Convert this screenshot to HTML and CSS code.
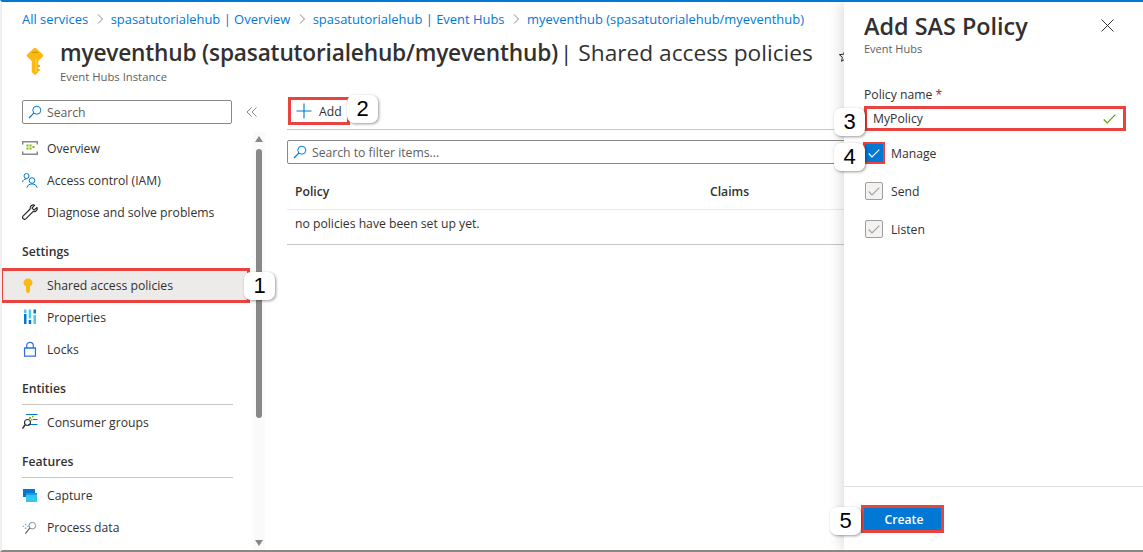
FILE: index.html
```html
<!DOCTYPE html>
<html>
<head>
  <meta charset="UTF-8">
  <title>Add SAS Policy</title>
  <link rel="stylesheet" href="styles.css">
</head>
<body>
  <div class="page">
    <nav class="crumbs">
      <a>All services</a><span class="sep"><svg width="8" height="10" viewBox="0 0 8 10"><path d="M2 .5 6.5 5 2 9.5" fill="none" stroke="#8a8886"/></svg></span>
      <a>spasatutorialehub | Overview</a><span class="sep"><svg width="8" height="10" viewBox="0 0 8 10"><path d="M2 .5 6.5 5 2 9.5" fill="none" stroke="#8a8886"/></svg></span>
      <a>spasatutorialehub | Event Hubs</a><span class="sep"><svg width="8" height="10" viewBox="0 0 8 10"><path d="M2 .5 6.5 5 2 9.5" fill="none" stroke="#8a8886"/></svg></span>
      <a>myeventhub (spasatutorialehub/myeventhub)</a>
    </nav>

    <header class="head">
      <svg class="head-key" width="18" height="28" viewBox="0 0 18 28">
        <path d="M9 2 16 8.500 11 13.500V24.500L9 26.500 7 24.500V13.500L2 8.500Z" fill="#fcb913" stroke="#fcb913" stroke-width="2.500" stroke-linejoin="round"/>
        <path d="M11.500 18H14V20H11.500M11.500 22H13.500V24H11.500" fill="#f5a800"/>
        <path d="M6.500 5.500H11.500" stroke="#e09a00" stroke-width="1.600" stroke-linecap="round"/>
        <path d="M10 12V25" stroke="#ffd75e" stroke-width="1"/>
      </svg>
      <div>
        <h1 class="title"><b>myeventhub (spasatutorialehub/myeventhub)</b><span class="title-rest"> | Shared access policies</span></h1>
        <div class="subtitle">Event Hubs Instance</div>
      </div>
      <svg class="star" width="14" height="14" viewBox="0 0 14 14"><path d="M7 1.500 8.600 5.300 12.700 5.600 9.600 8.300 10.500 12.300 7 10.200 3.500 12.300 4.400 8.300 1.300 5.600 5.400 5.300Z" fill="none" stroke="#323130"/></svg>
    </header>

    <div class="body">
      <aside class="side">
        <div class="side-top">
          <div class="searchbox side-search">
            <svg width="14" height="14" viewBox="0 0 14 14"><circle cx="8.800" cy="5.200" r="4" fill="none" stroke="#0078d4"/><path d="M5.800 8.200 1 13" stroke="#0078d4" stroke-width="1.200"/></svg>
            <span>Search</span>
          </div>
          <svg class="collapse" width="12" height="10" viewBox="0 0 12 10"><path d="M5.500 .5 1 5 5.500 9.500M10.500 .5 6 5 10.500 9.500" fill="none" stroke="#8a8886"/></svg>
        </div>
        <div class="side-scroll">
          <ul class="menu">
            <li class="item"><svg width="16" height="14" viewBox="0 0 16 14"><path d="M.7 3.500V.7H15.300V3.500M.7 10.500V13.300H15.300V10.500" fill="none" stroke="#8a8886" stroke-width="1.500"/><path d="M4.500 3.500h2v2h-2zM7.500 3.500h2v2h-2zM4.500 6.500h2v2h-2zM7.500 6.500h2v2h-2zM10.500 5h2v2h-2z" fill="#7fba00"/></svg><span>Overview</span></li>
            <li class="item"><svg width="16" height="15" viewBox="0 0 16 15"><circle cx="4.500" cy="3" r="2.500" fill="none" stroke="#0078d4"/><path d="M.5 9C1 6.800 2.500 6 4.500 6" fill="none" stroke="#0078d4"/><circle cx="10" cy="7.500" r="2.800" fill="none" stroke="#0078d4"/><path d="M5 14.800C5.300 12 7.500 11 10 11S14.700 12 15 14.800" fill="none" stroke="#0078d4"/></svg><span>Access control (IAM)</span></li>
            <li class="item"><svg width="16" height="16" viewBox="0 0 16 16"><path d="M15 3.500 12 6.200 10 4.200 12.600 1.200C10.500 .3 7.800 1.800 8.200 5L1 12.200C.2 13 .5 14 1.200 14.700S3 15.500 3.800 14.800L11 7.600C14 8.200 15.800 6 15 3.500Z" fill="none" stroke="#201f1e" stroke-width="1.100" stroke-linejoin="round"/></svg><span>Diagnose and solve problems</span></li>
          </ul>
          <h2 class="group">Settings</h2>
          <ul class="menu">
            <li class="item item-active"><svg width="12" height="16" viewBox="0 0 12 16"><path d="M6 .5C8.500 .5 10.500 2.300 10.500 4.800 10.500 6.500 9.300 7.700 8 8.300V13.500L6 15.500 4 13.500V8.300C2.700 7.700 1.500 6.500 1.500 4.800 1.500 2.300 3.500 .5 6 .5Z" fill="#fcb913"/></svg><span>Shared access policies</span></li>
            <li class="item"><svg width="13" height="16" viewBox="0 0 13 16"><path d="M.5 5h2.500v10H.5z" fill="#0078d4"/><path d="M.5 .5h2.500v3.500H.5z" fill="#50c8f0"/><path d="M5.200 .5h2.500v9H5.200z" fill="#50c8f0"/><path d="M5.200 11h2.500v4H5.200z" fill="#0078d4"/><path d="M10 .5h2.500v4H10z" fill="#0078d4"/><path d="M10 6h2.500v9H10z" fill="#50c8f0"/></svg><span>Properties</span></li>
            <li class="item"><svg width="13" height="16" viewBox="0 0 13 16"><path d="M1 7H12V15.200H1Z" fill="none" stroke="#2d6fe0" stroke-width="1.300"/><path d="M3.200 7V4.500C3.200 .2 9.800 .2 9.800 4.500V7" fill="none" stroke="#2d6fe0" stroke-width="1.200"/></svg><span>Locks</span></li>
          </ul>
          <h2 class="group group-ruled">Entities</h2>
          <ul class="menu">
            <li class="item"><svg width="16" height="16" viewBox="0 0 16 16"><path d="M4 .5H15.500M11 5.500H15.500M6 10.500H15.500" stroke="#0078d4"/><path d="M7 3h2v2H7zM10 2h1.500v1.500H10zM9 5h1.500v1.500H9z" fill="#7fba00"/><circle cx="5.500" cy="8.500" r="3" fill="none" stroke="#323130" stroke-width="1.200"/><path d="M3.200 10.800.5 14.500" stroke="#323130" stroke-width="1.500"/></svg><span>Consumer groups</span></li>
          </ul>
          <h2 class="group group-ruled">Features</h2>
          <ul class="menu">
            <li class="item"><svg width="14" height="13" viewBox="0 0 14 13"><path d="M0 0H12V8H0Z" fill="#0078d4"/><path d="M3 4H14V13H3Z" fill="#32c7ef"/><path d="M3 4H14V6H3Z" fill="#1a9ad6"/></svg><span>Capture</span></li>
            <li class="item"><svg width="15" height="15" viewBox="0 0 16 16"><circle cx="10.500" cy="6" r="3.500" fill="none" stroke="#8a8886"/><path d="M8 8.500 3 14.500" stroke="#605e5c" stroke-width="1.200"/><path d="M0 6h1.500v1.500H0zM2.500 4h1.500v1.500H2.500zM5 6h1.500v1.500H5zM2.500 8h1.500v1.500H2.500z" fill="#5ab4e8"/></svg><span>Process data</span></li>
          </ul>
        </div>
        <div class="scrollbar">
          <svg width="8" height="6" viewBox="0 0 8 6"><path d="M4 0 8 6H0Z" fill="#8a8886"/></svg>
          <div class="scroll-track"><div class="scroll-thumb"></div></div>
          <svg width="8" height="6" viewBox="0 0 8 6"><path d="M0 0H8L4 6Z" fill="#8a8886"/></svg>
        </div>
      </aside>

      <main class="content">
        <div class="toolbar">
          <button class="add-btn" type="button">
            <svg width="16" height="16" viewBox="0 0 16 16"><path d="M8 .5V15.500M.5 8H15.500" stroke="#0078d4" stroke-width="1.100"/></svg>
            <span>Add</span>
          </button>
        </div>
        <div class="searchbox filter">
          <svg width="14" height="14" viewBox="0 0 14 14"><circle cx="8.800" cy="5.200" r="4" fill="none" stroke="#0078d4"/><path d="M5.800 8.200 1 13" stroke="#0078d4" stroke-width="1.200"/></svg>
          <span>Search to filter items...</span>
        </div>
        <div class="table-row table-head"><span class="col-policy">Policy</span><span>Claims</span></div>
        <div class="table-row table-empty">no policies have been set up yet.</div>
      </main>
    </div>

    <section class="panel">
      <div class="panel-head">
        <div>
          <h2 class="panel-title">Add SAS Policy</h2>
          <div class="panel-sub">Event Hubs</div>
        </div>
        <svg class="close" width="13" height="13" viewBox="0 0 13 13"><path d="M.5 .5 12.500 12.500M12.500 .5 .5 12.500" stroke="#323130"/></svg>
      </div>
      <form class="panel-form">
        <label class="field-label">Policy name <span class="req">*</span></label>
        <div class="name-input">
          <span>MyPolicy</span>
          <svg width="13" height="10" viewBox="0 0 13 10"><path d="M.7 5.500 4.200 9 12.300 .7" fill="none" stroke="#57a300" stroke-width="1.100"/></svg>
        </div>
        <div class="check">
          <span class="box box-on"><svg width="12" height="9" viewBox="0 0 12 9"><path d="M.7 4.500 4 8 11.300 .7" fill="none" stroke="#fff" stroke-width="1.100"/></svg></span>
          <span>Manage</span>
        </div>
        <div class="check">
          <span class="box box-off"><svg width="12" height="9" viewBox="0 0 12 9"><path d="M.7 4.500 4 8 11.300 .7" fill="none" stroke="#a19f9d" stroke-width="1.100"/></svg></span>
          <span>Send</span>
        </div>
        <div class="check">
          <span class="box box-off"><svg width="12" height="9" viewBox="0 0 12 9"><path d="M.7 4.500 4 8 11.300 .7" fill="none" stroke="#a19f9d" stroke-width="1.100"/></svg></span>
          <span>Listen</span>
        </div>
      </form>
      <div class="panel-foot">
        <button class="create-btn" type="button">Create</button>
      </div>
    </section>

    <div class="callout callout-1">1</div>
    <div class="callout callout-2">2</div>
    <div class="callout callout-3">3</div>
    <div class="callout callout-4">4</div>
    <div class="callout callout-5">5</div>
  </div>
</body>
</html>
```

FILE: styles.css
```css
* {
  box-sizing: border-box;
}
html, body {
  margin: 0;
  height: 100%;
}
body {
  font-family: "Open Sans", "Noto Sans", Arial, sans-serif;
  font-size: 12.200px;
  color: #323130;
  background: #fff;
  overflow: hidden;
}
ul {
  list-style-type: none;
  margin: 0;
  padding: 0;
}
h1, h2 {
  margin: 0;
}

.page {
  position: relative;
  width: 1143px;
  height: 552px;
  overflow: hidden;
  border-top: 2px solid #0078d4;
  border-bottom: 2px solid #8a8886;
  border-left: 2px solid #efefef;
}

.crumbs {
  display: flex;
  align-items: center;
  height: 34px;
  padding: 0 0 0 20px;
  font-size: 12.950px;
  color: #0078d4;
  white-space: nowrap;
}
.sep {
  display: flex;
  margin: 0 7px 0 7.500px;
}

.head {
  display: flex;
  align-items: flex-start;
  height: 61px;
  padding: 3px 0 0 24px;
  white-space: nowrap;
}
.head-key {
  margin-top: 8px;
  margin-right: 16px;
  flex: none;
}
.title {
  font-size: 22.700px;
  font-weight: 400;
  line-height: 28px;
  letter-spacing: -0.200px;
}
.title b {
  font-weight: 600;
}
.title-rest {
  margin-left: -4px;
  letter-spacing: 0;
}
.subtitle {
  font-size: 11.300px;
  color: #605e5c;
  line-height: 15px;
  margin-top: 2px;
}
.star {
  margin: 10px 0 0 25px;
  flex: none;
}

.body {
  display: flex;
  height: 453px;
}

.side {
  position: relative;
  width: 285px;
  flex: none;
  display: flex;
  flex-wrap: wrap;
  align-content: flex-start;
}
.side-top {
  display: flex;
  align-items: center;
  width: 100%;
  height: 30px;
  padding: 0 0 0 20px;
}
.searchbox {
  display: flex;
  align-items: center;
  gap: 5px;
  height: 24px;
  border: 1px solid #8a8886;
  border-radius: 2px;
  padding-left: 5px;
  color: #605e5c;
}
.side-search {
  width: 210px;
}
.collapse {
  margin-left: 14px;
}
.side-scroll {
  width: 251px;
  padding-top: 5px;
}
.item {
  display: flex;
  align-items: center;
  height: 32px;
  position: relative;
  padding-left: 45px;
  white-space: nowrap;
}
.item svg {
  position: absolute;
  left: 28px;
  transform: translateX(-50%);
}
.item-active {
  height: 35px;
  margin: -2px 3px -2px -2px;
  padding-left: 44px;
  background: #edebe9;
  border: 3px solid #e8433f;
  width: 250px;
}
.item-active svg {
  left: 25px;
}
.group {
  font-size: 12.200px;
  font-weight: 600;
  line-height: 16px;
  padding: 16px 0 0 20px;
  margin-bottom: 10px;
}
.group-ruled {
  margin: 0 20px 1px 20px;
  padding: 16px 0 7px;
  border-bottom: 1px solid #c8c6c4;
}
.scrollbar {
  position: absolute;
  left: 251px;
  top: 35px;
  bottom: 0;
  width: 12px;
  background: #fafafa;
  display: flex;
  flex-direction: column;
  align-items: center;
  padding: 4px 0;
}
.scroll-track {
  flex: 1;
  padding-top: 7px;
}
.scroll-thumb {
  width: 6px;
  height: 269px;
  border-radius: 3px;
  background: #8a8886;
}

.content {
  width: 100%;
  min-width: 0;
}
.toolbar {
  height: 33px;
  border-bottom: 1px solid #c8c6c4;
}
.add-btn {
  display: flex;
  align-items: center;
  gap: 7px;
  width: 62px;
  height: 28px;
  margin-left: 1px;
  padding: 0 0 0 5px;
  background: #fff;
  border: 3px solid #e8433f;
  font: inherit;
  color: #323130;
}
.filter {
  margin-top: 10px;
}
.table-row {
  display: flex;
  align-items: center;
  padding-left: 8px;
  border-bottom: 1px solid #edebe9;
}
.table-head {
  height: 46px;
  font-weight: 600;
  padding-top: 10px;
}
.col-policy {
  width: 415px;
}
.table-empty {
  height: 35px;
  padding-bottom: 8px;
  border-bottom-color: #c8c6c4;
}

.panel {
  position: absolute;
  left: 842px;
  top: 0;
  bottom: 0;
  width: 299px;
  background: #fff;
  box-shadow: -4px 0 12px rgba(0, 0, 0, 0.12);
  display: flex;
  flex-direction: column;
}
.panel-head {
  display: flex;
  justify-content: space-between;
  padding: 8px 29px 0 20px;
  height: 74px;
}
.panel-title {
  font-size: 23.400px;
  font-weight: 600;
  line-height: 32px;
}
.panel-sub {
  font-size: 11px;
  color: #605e5c;
  line-height: 15px;
  margin-top: -1px;
}
.close {
  margin-top: 9px;
}
.panel-form {
  flex: 1;
  padding-left: 20px;
}
.field-label {
  display: block;
  height: 19px;
  margin-top: 11px;
  line-height: 16px;
}
.req {
  color: #a4262c;
}
.name-input {
  display: flex;
  align-items: center;
  justify-content: space-between;
  width: 262px;
  height: 25px;
  margin-bottom: 11px;
  padding: 0 7px 0 6px;
  border: 3px solid #e8433f;
}
.check {
  display: flex;
  align-items: center;
  gap: 8px;
  height: 22px;
  margin-bottom: 16px;
}
.box {
  display: flex;
  align-items: center;
  justify-content: center;
  width: 18px;
  height: 18px;
  margin-left: 1px;
  border-radius: 2px;
}
.box-on {
  background: #0078d4;
  outline: 2px solid #e8433f;
  border-radius: 0;
}
.box-off {
  background: #f3f2f1;
  border: 1px solid #a19f9d;
}
.panel-foot {
  height: 64px;
  border-top: 1px solid #e1dfdd;
  padding: 18px 0 0 17px;
}
.create-btn {
  width: 83px;
  height: 28px;
  padding: 0 0 0 3px;
  background: #0078d4;
  border: 3px solid #e8433f;
  color: #fff;
  font: inherit;
  font-weight: 600;
}

.callout {
  position: absolute;
  display: flex;
  align-items: center;
  justify-content: center;
  width: 31px;
  height: 28px;
  background: #fff;
  border-radius: 7px;
  box-shadow: 1px 1px 3px rgba(0, 0, 0, 0.4);
  font-family: "Liberation Sans", Arial, sans-serif;
  font-size: 22px;
  color: #000;
}
.callout-1 { left: 242px; top: 270px; }
.callout-2 { left: 345px; top: 93px; }
.callout-3 { left: 832px; top: 106px; }
.callout-4 { left: 832px; top: 141px; }
.callout-5 { left: 828px; top: 505px; }
```
